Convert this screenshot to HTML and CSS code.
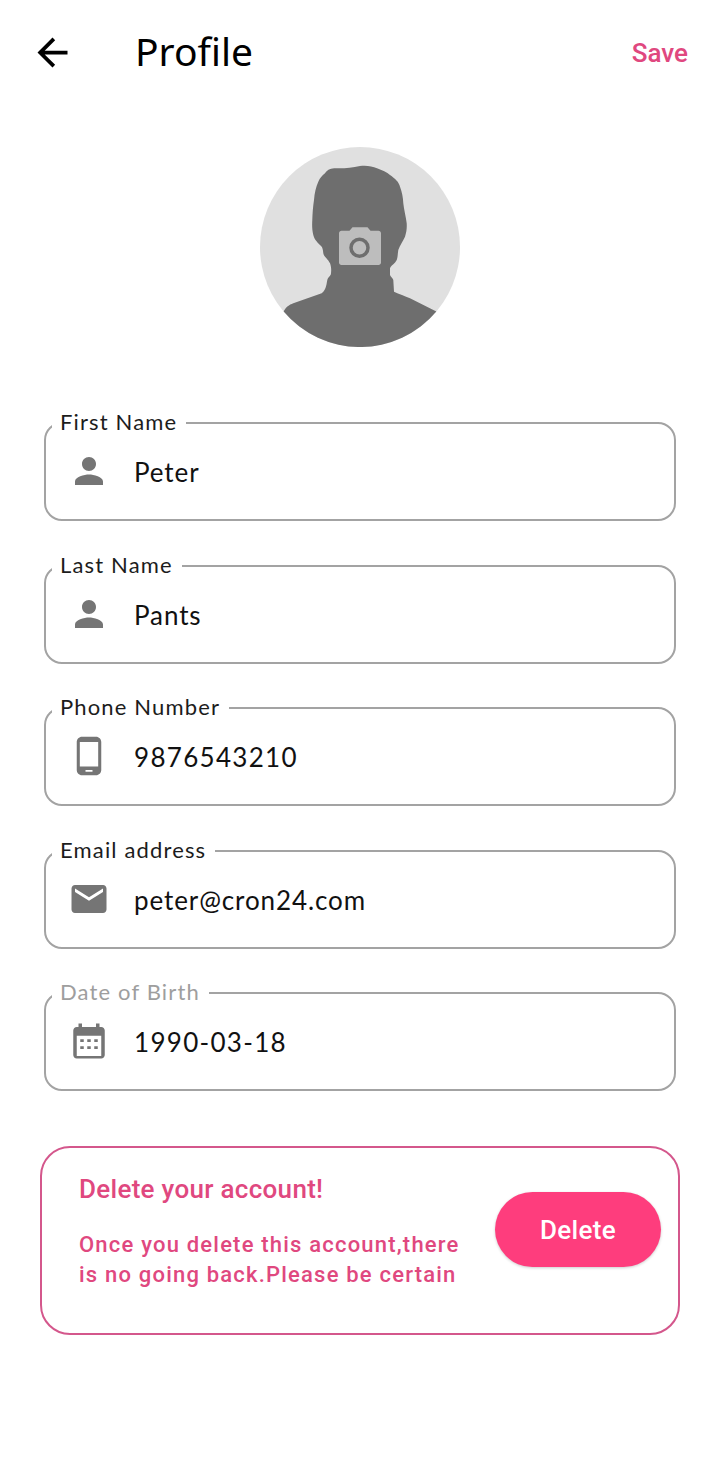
FILE: index.html
```html
<!DOCTYPE html>
<html lang="en">

<head>
    <meta charset="UTF-8">
    <meta name="viewport" content="width=device-width, initial-scale=1.0">
    <title>Profile</title>

    <link rel="stylesheet" href="styles.css">
</head>

<body>
    <header class="topbar">
        <svg class="back-icon" viewBox="0 0 24 24">
            <path d="M20 11H7.83l5.59-5.59L12 4l-8 8 8 8 1.41-1.41L7.83 13H20v-2z" />
        </svg>
        <h1 class="title">Profile</h1>
        <span class="save">Save</span>
    </header>

    <svg class="avatar" viewBox="0 0 200 200">
        <circle cx="100" cy="100" r="100" fill="#e0e0e0" />
        <path fill="#6e6e6e" d="M65 26.3C68 22 71 21.3 76 21.3C84 21.5 92 21 100 19C107 18 112 19.5 117 21.3C122 23 127 25.5 130 28C135 31.5 139 35 140 39.7C142 45 143 50 143.3 56.3C144 63 146 70 146.7 76.3C147 81 146.5 85 145 89.7C143 94 140 98 138.3 103C137.5 107 138 110 136.7 113C135 117 131 118 130 121.3L130 128C130.5 130 133 131 133.3 133L134 144.7C139 147 145 149 150 151.3L176.35 164.6A100 100 0 0 1 23.65 164.6C26 160 29 158 33.3 156.3L61.7 146.3C65 144 66 140 66.7 136.3L67.3 133C68 130 71 129 71 126.3C71.5 122 71 119 70 116.3C68 112 64 110 63.3 106.3C63 103 62.5 101 61.7 99.7C58 96 54.5 93 53.3 88C52 83 52 78 52.3 73C52.5 66 53 60 54 53C54.5 46 56 40 58.3 34.7C60 31 62 28.5 65 26.3z" />
        <path fill="#bdbdbd" d="M81.500 83.700h8l3-3.400h15l3 3.400h8c1.400 0 2.500 1.100 2.500 2.500V115.500c0 1.400-1.100 2.500-2.500 2.500H81.500c-1.400 0-2.500-1.100-2.500-2.500V86.200c0-1.400 1.100-2.500 2.500-2.500z" />
        <circle cx="99.500" cy="100.700" r="8.500" fill="none" stroke="#6e6e6e" stroke-width="3.500" />
    </svg>

    <form class="form">
        <fieldset class="field">
            <legend class="field-label">First Name</legend>
            <div class="field-row">
                <svg class="field-icon" viewBox="0 0 24 24">
                    <path d="M12 12c2.21 0 4-1.79 4-4s-1.79-4-4-4-4 1.79-4 4 1.79 4 4 4zm0 2c-2.67 0-8 1.34-8 4v2h16v-2c0-2.66-5.33-4-8-4z" />
                </svg>
                <span class="field-value">Peter</span>
            </div>
        </fieldset>

        <fieldset class="field">
            <legend class="field-label">Last Name</legend>
            <div class="field-row">
                <svg class="field-icon" viewBox="0 0 24 24">
                    <path d="M12 12c2.21 0 4-1.79 4-4s-1.79-4-4-4-4 1.79-4 4 1.79 4 4 4zm0 2c-2.67 0-8 1.34-8 4v2h16v-2c0-2.66-5.33-4-8-4z" />
                </svg>
                <span class="field-value">Pants</span>
            </div>
        </fieldset>

        <fieldset class="field">
            <legend class="field-label">Phone Number</legend>
            <div class="field-row">
                <svg class="field-icon" viewBox="0 0 24 24">
                    <path d="M16 1H8C6.34 1 5 2.34 5 4v16c0 1.66 1.34 3 3 3h8c1.66 0 3-1.34 3-3V4c0-1.66-1.34-3-3-3zm-2 20h-4v-1h4v1zm3.25-3H6.75V4h10.5v14z" />
                </svg>
                <span class="field-value field-value-num">9876543210</span>
            </div>
        </fieldset>

        <fieldset class="field">
            <legend class="field-label">Email address</legend>
            <div class="field-row">
                <svg class="field-icon" viewBox="0 0 24 24">
                    <path d="M20 4H4c-1.1 0-1.99.9-1.99 2L2 18c0 1.1.9 2 2 2h16c1.1 0 2-.9 2-2V6c0-1.1-.9-2-2-2zm0 4l-8 5-8-5V6l8 5 8-5v2z" />
                </svg>
                <span class="field-value">peter@cron24.com</span>
            </div>
        </fieldset>

        <fieldset class="field">
            <legend class="field-label field-label-muted">Date of Birth</legend>
            <div class="field-row">
                <svg class="field-icon" viewBox="0 0 24 24">
                    <path d="M19 4h-1V2h-2v2H8V2H6v2H5c-1.11 0-1.99.9-1.99 2L3 20c0 1.1.89 2 2 2h14c1.1 0 2-.9 2-2V6c0-1.1-.9-2-2-2zm0 16.500H5V9h14v11.500z" />
                    <path d="M7 11h2v1.600H7zM11 11h2v1.600h-2zM15 11h2v1.600h-2zM7 15h2v1.600H7zM11 15h2v1.600h-2zM15 15h2v1.600h-2z" />
                </svg>
                <span class="field-value field-value-num">1990-03-18</span>
            </div>
        </fieldset>
    </form>

    <section class="danger">
        <div class="danger-text">
            <h2 class="danger-title">Delete your account!</h2>
            <p class="danger-note">Once you delete this account,there<br>is no going back.Please be certain</p>
        </div>
        <button type="button" class="danger-btn">Delete</button>
    </section>
</body>

</html>
```

FILE: styles.css
```css
body {
    margin: 0;
    background: #fff;
    font-family: "Lato", "Noto Sans", sans-serif;
}

.topbar {
    height: 104px;
    display: flex;
    align-items: center;
    padding: 0 32px 0 30px;
}

.back-icon {
    width: 45px;
    height: 45px;
    fill: #000;
}

.title {
    margin: 0 0 4px 60px;
    font-family: "Noto Sans", sans-serif;
    font-size: 39px;
    font-weight: 400;
    color: #000;
    flex: 1;
}

.save {
    margin-top: 1px;
    font-family: "Roboto", sans-serif;
    font-size: 26px;
    font-weight: 500;
    color: #e0487f;
}

.avatar {
    display: block;
    width: 200px;
    height: 200px;
    margin: 43px auto 0;
}

.form {
    margin-top: 64px;
    padding: 0 44px;
    display: flex;
    flex-direction: column;
    gap: 32.5px;
}

.field {
    margin: 0;
    padding: 0;
    height: 106px;
    border: 2px solid #a3a3a3;
    border-radius: 18px;
    min-width: 0;
}

.field-label {
    margin-left: 6px;
    padding: 0 9px 2px 8px;
    font-size: 22px;
    line-height: 22px;
    letter-spacing: 1.15px;
    color: #1c1c1c;
}

.field-label-muted {
    color: #9e9e9e;
}

.field-row {
    height: 96px;
    margin-top: -12px;
    display: flex;
    align-items: center;
    padding-left: 22px;
}

.field-icon {
    width: 42px;
    height: 42px;
    fill: #757575;
    flex: none;
}

.field-value {
    margin-left: 24px;
    padding-top: 2px;
    font-size: 26px;
    letter-spacing: 0.9px;
    color: #111;
}

.field-value-num {
    letter-spacing: 1.3px;
}

.danger {
    margin: 55px 40px 0;
    height: 189px;
    box-sizing: border-box;
    border: 2px solid #d4578c;
    border-radius: 30px;
    display: flex;
    align-items: center;
    justify-content: space-between;
    padding: 0 17px 0 37px;
    font-family: "Roboto", sans-serif;
    color: #e0487f;
}

.danger-text {
    padding-bottom: 17px;
}

.danger-title {
    margin: 0 0 26px;
    font-size: 26px;
    line-height: 30px;
    font-weight: 500;
    letter-spacing: 0.3px;
}

.danger-note {
    margin: 0;
    font-size: 22px;
    line-height: 30px;
    font-weight: 500;
    letter-spacing: 1.2px;
}

.danger-btn {
    width: 166px;
    height: 75px;
    margin-bottom: 22px;
    border: 0;
    border-radius: 38px;
    background: #fe3d7d;
    color: #fff;
    font-family: "Roboto", sans-serif;
    font-size: 26px;
    font-weight: 500;
    letter-spacing: 0.3px;
    box-shadow: 0 1px 3px rgba(0, 0, 0, 0.2);
}
```
